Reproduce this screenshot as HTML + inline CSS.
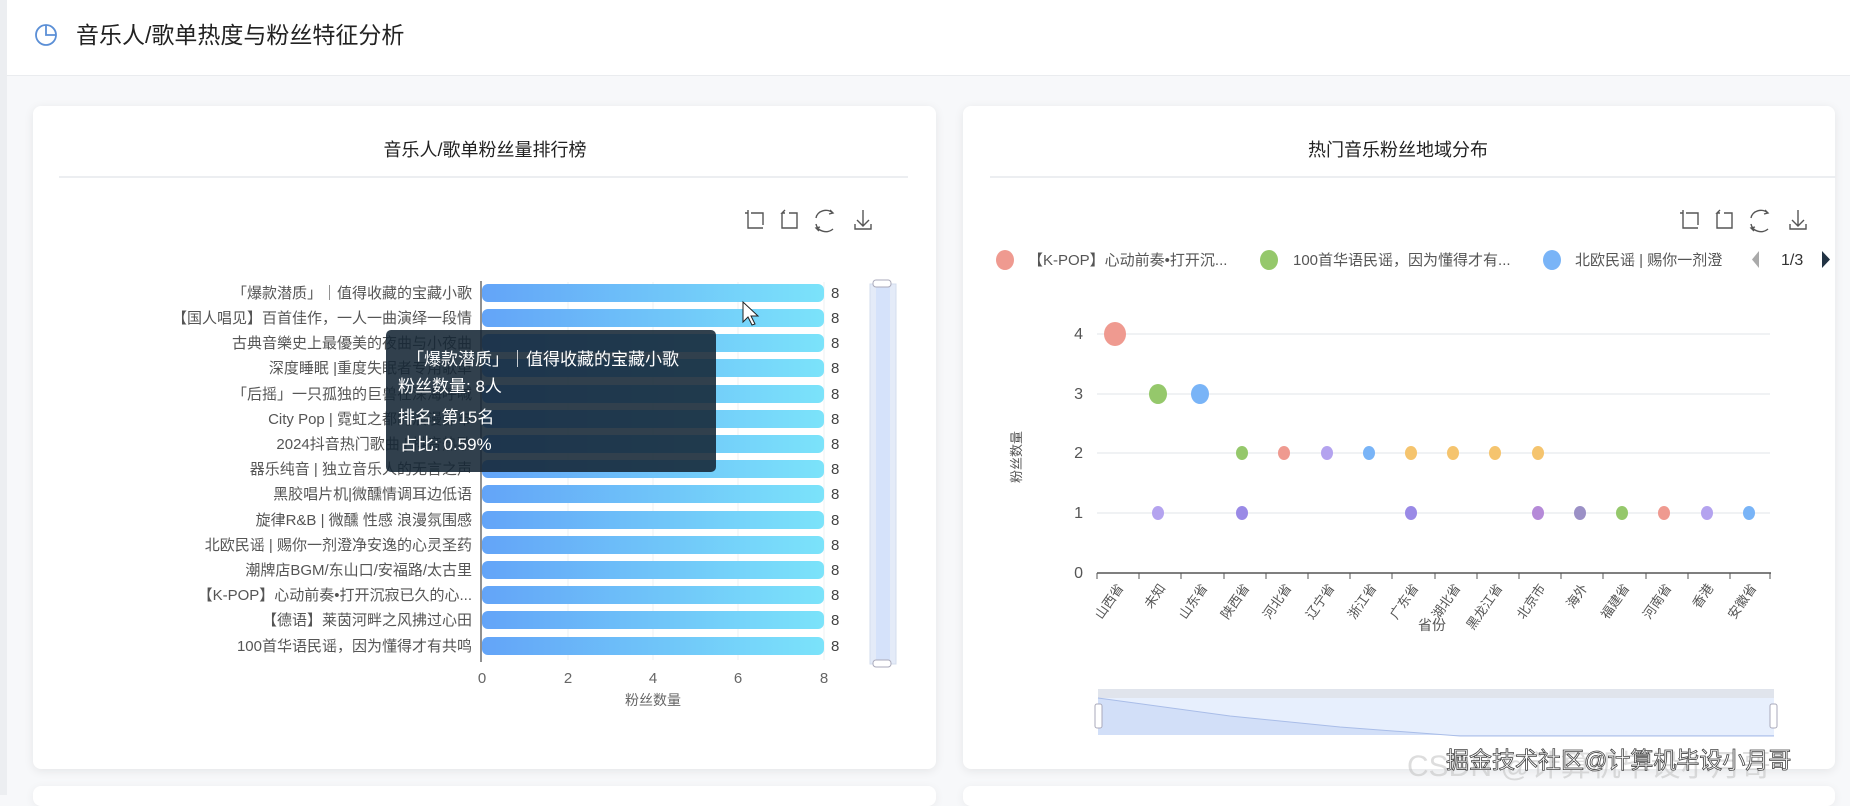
<!DOCTYPE html>
<html><head><meta charset="utf-8"><style>
*{margin:0;padding:0;box-sizing:border-box}
body{width:1850px;height:795px;overflow:hidden;background:#f7f8fa;font-family:"Liberation Sans","Noto Sans CJK SC",sans-serif;position:relative}
.strip{position:absolute;left:0;top:0;width:7px;height:795px;background:#eceef1}
.header{position:absolute;left:7px;top:0;width:1843px;height:76px;background:#fff;border-bottom:1px solid #eaecef}
.card{position:absolute;top:106px;height:663px;background:#fff;border-radius:8px;box-shadow:0 2px 10px rgba(0,0,0,.08)}
svg{position:absolute;left:0;top:0}
</style></head><body>
<div class="strip"></div>
<div class="header"></div>
<div class="card" style="left:33px;width:903px"></div>
<div class="card" style="left:963px;width:872px"></div>
<div style="position:absolute;left:33px;top:786px;width:903px;height:20px;background:#fff;border-radius:8px;box-shadow:0 2px 10px rgba(0,0,0,.06)"></div>
<div style="position:absolute;left:963px;top:786px;width:872px;height:20px;background:#fff;border-radius:8px;box-shadow:0 2px 10px rgba(0,0,0,.06)"></div>
<svg width="1850" height="795" xmlns="http://www.w3.org/2000/svg" font-family="Liberation Sans, Noto Sans CJK SC, sans-serif">
<defs><linearGradient id="g" x1="0" x2="1"><stop offset="0" stop-color="#63a4f8"/><stop offset="1" stop-color="#7be3fa"/></linearGradient></defs>
<circle cx="46" cy="35" r="10" fill="none" stroke="#5b8fd6" stroke-width="1.8"/>
<path d="M46 25V35H56" fill="none" stroke="#5b8fd6" stroke-width="1.8"/>
<text x="76" y="43" font-size="23" fill="#222">音乐人/歌单热度与粉丝特征分析</text>
<text x="485" y="156" font-size="18" fill="#222" text-anchor="middle">音乐人/歌单粉丝量排行榜</text>
<line x1="59" y1="177" x2="908" y2="177" stroke="#eceef1" stroke-width="2"/>
<g fill="none" stroke="#555" stroke-width="1.4">
<path d="M748 210v3h-3M748 213v15h15M751 213h12v12"/>
<path d="M785 213h-3l3-3M782 213v15h15v-15h-8"/>
<path d="M833 213a10 9 0 0 0-17 5M816 224a10 9 0 0 0 17 5M830 210l3 3-4 1M819 231l-3-3 4-1"/>
<path d="M863 210v16M857 220l6 6 6-6M855 224v5h16v-5"/>
</g>
<g stroke="#eef0f3"><line x1="568" y1="282" x2="568" y2="660"/><line x1="653" y1="282" x2="653" y2="660"/><line x1="738" y1="282" x2="738" y2="660"/><line x1="824" y1="282" x2="824" y2="660"/></g>
<g fill="url(#g)">
<rect x="482" y="284" width="342" height="18" rx="6"/><rect x="482" y="309" width="342" height="18" rx="6"/><rect x="482" y="334" width="342" height="18" rx="6"/><rect x="482" y="359" width="342" height="18" rx="6"/><rect x="482" y="385" width="342" height="18" rx="6"/><rect x="482" y="410" width="342" height="18" rx="6"/><rect x="482" y="435" width="342" height="18" rx="6"/><rect x="482" y="460" width="342" height="18" rx="6"/><rect x="482" y="485" width="342" height="18" rx="6"/><rect x="482" y="511" width="342" height="18" rx="6"/><rect x="482" y="536" width="342" height="18" rx="6"/><rect x="482" y="561" width="342" height="18" rx="6"/><rect x="482" y="586" width="342" height="18" rx="6"/><rect x="482" y="611" width="342" height="18" rx="6"/><rect x="482" y="637" width="342" height="18" rx="6"/>
</g>
<line x1="481" y1="281" x2="481" y2="662" stroke="#555" stroke-width="1.3"/>
<g font-size="15" fill="#555" text-anchor="end">
<text x="472" y="298">「爆款潜质」｜值得收藏的宝藏小歌</text>
<text x="472" y="323">【国人唱见】百首佳作，一人一曲演绎一段情</text>
<text x="472" y="348">古典音樂史上最優美的夜曲与小夜曲</text>
<text x="472" y="373">深度睡眠 |重度失眠者专用歌单</text>
<text x="472" y="399">「后摇」一只孤独的巨兽在深海呼喊</text>
<text x="472" y="424">City Pop | 霓虹之都的浪漫都市</text>
<text x="472" y="449">2024抖音热门歌曲 | 抖音热歌</text>
<text x="472" y="474">器乐纯音 | 独立音乐人的无言之声</text>
<text x="472" y="499">黑胶唱片机|微醺情调耳边低语</text>
<text x="472" y="525">旋律R&amp;B | 微醺 性感 浪漫氛围感</text>
<text x="472" y="550">北欧民谣 | 赐你一剂澄净安逸的心灵圣药</text>
<text x="472" y="575">潮牌店BGM/东山口/安福路/太古里</text>
<text x="472" y="600">【K-POP】心动前奏•打开沉寂已久的心...</text>
<text x="472" y="625">【德语】莱茵河畔之风拂过心田</text>
<text x="472" y="651">100首华语民谣，因为懂得才有共鸣</text>
</g>
<g font-size="15" fill="#444">
<text x="831" y="298">8</text><text x="831" y="323">8</text><text x="831" y="348">8</text><text x="831" y="373">8</text><text x="831" y="399">8</text><text x="831" y="424">8</text><text x="831" y="449">8</text><text x="831" y="474">8</text><text x="831" y="499">8</text><text x="831" y="525">8</text><text x="831" y="550">8</text><text x="831" y="575">8</text><text x="831" y="600">8</text><text x="831" y="625">8</text><text x="831" y="651">8</text>
</g>
<g font-size="15" fill="#666" text-anchor="middle">
<text x="482" y="683">0</text><text x="568" y="683">2</text><text x="653" y="683">4</text><text x="738" y="683">6</text><text x="824" y="683">8</text>
<text x="653" y="705" font-size="14">粉丝数量</text>
</g>
<rect x="870" y="284" width="26" height="380" fill="#e4ebf8" stroke="#d3dcee"/>
<rect x="876" y="286" width="14" height="376" fill="#d5e2fa"/>
<rect x="873" y="280" width="18" height="7" rx="3" fill="#fff" stroke="#aab"/>
<rect x="873" y="660" width="18" height="7" rx="3" fill="#fff" stroke="#aab"/>
<rect x="386" y="330" width="330" height="142" rx="5" fill="#142634" fill-opacity="0.88"/>
<g font-size="17" fill="#fff">
<text x="407" y="365">「爆款潜质」｜值得收藏的宝藏小歌</text>
<text x="398" y="392">粉丝数量: 8人</text>
<text x="398" y="423">排名: 第15名</text>
<text x="400" y="450">占比: 0.59%</text>
</g>
<path d="M743 302v20l5-5 4 8 3-1-4-8h7z" fill="#fff" stroke="#222" stroke-width="1"/>
<text x="1398" y="156" font-size="18" fill="#222" text-anchor="middle">热门音乐粉丝地域分布</text>
<line x1="990" y1="177" x2="1836" y2="177" stroke="#eceef1" stroke-width="2"/>
<g fill="none" stroke="#555" stroke-width="1.4" transform="translate(935,0)">
<path d="M748 210v3h-3M748 213v15h15M751 213h12v12"/>
<path d="M785 213h-3l3-3M782 213v15h15v-15h-8"/>
<path d="M833 213a10 9 0 0 0-17 5M816 224a10 9 0 0 0 17 5M830 210l3 3-4 1M819 231l-3-3 4-1"/>
<path d="M863 210v16M857 220l6 6 6-6M855 224v5h16v-5"/>
</g>
<g font-size="15" fill="#555">
<ellipse cx="1005" cy="260" rx="9" ry="10" fill="#ef9a90"/><text x="1028" y="265">【K-POP】心动前奏•打开沉...</text>
<ellipse cx="1269" cy="260" rx="9" ry="10" fill="#95c86b"/><text x="1293" y="265">100首华语民谣，因为懂得才有...</text>
<ellipse cx="1552" cy="260" rx="9" ry="10" fill="#79b4f7"/><text x="1575" y="265">北欧民谣 | 赐你一剂澄</text>
<rect x="1740" y="245" width="14" height="30" fill="#fff"/>
<path d="M1759 251v17l-7-8.5z" fill="#aaa"/><text x="1781" y="265" font-size="16" fill="#333">1/3</text>
<path d="M1822 251v17l8-8.5z" fill="#223344"/>
</g>
<g stroke="#eceef1" stroke-width="1.5"><line x1="1097" y1="334" x2="1770" y2="334"/><line x1="1097" y1="394" x2="1770" y2="394"/><line x1="1097" y1="453" x2="1770" y2="453"/><line x1="1097" y1="513" x2="1770" y2="513"/></g>
<line x1="1097" y1="573" x2="1771" y2="573" stroke="#555" stroke-width="1.5"/>
<g stroke="#555"><line x1="1097" y1="573" x2="1097" y2="579"/><line x1="1139" y1="573" x2="1139" y2="579"/><line x1="1181" y1="573" x2="1181" y2="579"/><line x1="1224" y1="573" x2="1224" y2="579"/><line x1="1266" y1="573" x2="1266" y2="579"/><line x1="1308" y1="573" x2="1308" y2="579"/><line x1="1350" y1="573" x2="1350" y2="579"/><line x1="1392" y1="573" x2="1392" y2="579"/><line x1="1435" y1="573" x2="1435" y2="579"/><line x1="1477" y1="573" x2="1477" y2="579"/><line x1="1519" y1="573" x2="1519" y2="579"/><line x1="1561" y1="573" x2="1561" y2="579"/><line x1="1603" y1="573" x2="1603" y2="579"/><line x1="1646" y1="573" x2="1646" y2="579"/><line x1="1688" y1="573" x2="1688" y2="579"/><line x1="1730" y1="573" x2="1730" y2="579"/><line x1="1770" y1="573" x2="1770" y2="579"/></g>
<g font-size="16" fill="#555" text-anchor="end">
<text x="1083" y="339">4</text><text x="1083" y="399">3</text><text x="1083" y="458">2</text><text x="1083" y="518">1</text><text x="1083" y="578">0</text>
</g>
<text transform="translate(1021,457) rotate(-90)" font-size="13" fill="#555" text-anchor="middle">粉丝数量</text>
<g font-size="13" fill="#555" text-anchor="end">
<text transform="translate(1124,588) rotate(-55)">山西省</text>
<text transform="translate(1166,588) rotate(-55)">未知</text>
<text transform="translate(1208,588) rotate(-55)">山东省</text>
<text transform="translate(1250,588) rotate(-55)">陕西省</text>
<text transform="translate(1292,588) rotate(-55)">河北省</text>
<text transform="translate(1335,588) rotate(-55)">辽宁省</text>
<text transform="translate(1377,588) rotate(-55)">浙江省</text>
<text transform="translate(1419,588) rotate(-55)">广东省</text>
<text transform="translate(1461,588) rotate(-55)">湖北省</text>
<text transform="translate(1503,588) rotate(-55)">黑龙江省</text>
<text transform="translate(1546,588) rotate(-55)">北京市</text>
<text transform="translate(1588,588) rotate(-55)">海外</text>
<text transform="translate(1630,588) rotate(-55)">福建省</text>
<text transform="translate(1672,588) rotate(-55)">河南省</text>
<text transform="translate(1714,588) rotate(-55)">香港</text>
<text transform="translate(1757,588) rotate(-55)">安徽省</text>
</g>
<text x="1432" y="630" font-size="14" fill="#555" text-anchor="middle">省份</text>
<g>
<ellipse cx="1115" cy="334" rx="11" ry="12" fill="#ef9a90"/>
<ellipse cx="1158" cy="394" rx="9" ry="10" fill="#95c86b"/>
<ellipse cx="1200" cy="394" rx="9" ry="10" fill="#79b4f7"/>
<ellipse cx="1242" cy="453" rx="6" ry="7" fill="#95c86b"/>
<ellipse cx="1284" cy="453" rx="6" ry="7" fill="#ef9a90"/>
<ellipse cx="1327" cy="453" rx="6" ry="7" fill="#b4a3ef"/>
<ellipse cx="1369" cy="453" rx="6" ry="7" fill="#79b4f7"/>
<ellipse cx="1411" cy="453" rx="6" ry="7" fill="#f5c46e"/>
<ellipse cx="1453" cy="453" rx="6" ry="7" fill="#f5c46e"/>
<ellipse cx="1495" cy="453" rx="6" ry="7" fill="#f5c46e"/>
<ellipse cx="1538" cy="453" rx="6" ry="7" fill="#f5c46e"/>
<ellipse cx="1158" cy="513" rx="6" ry="7" fill="#b4a3ef"/>
<ellipse cx="1242" cy="513" rx="6" ry="7" fill="#9a8ae6"/>
<ellipse cx="1411" cy="513" rx="6" ry="7" fill="#9a8ae6"/>
<ellipse cx="1538" cy="513" rx="6" ry="7" fill="#b58ad8"/>
<ellipse cx="1580" cy="513" rx="6" ry="7" fill="#9b90c6"/>
<ellipse cx="1622" cy="513" rx="6" ry="7" fill="#95c86b"/>
<ellipse cx="1664" cy="513" rx="6" ry="7" fill="#ef9a90"/>
<ellipse cx="1707" cy="513" rx="6" ry="7" fill="#b4a3ef"/>
<ellipse cx="1749" cy="513" rx="6" ry="7" fill="#79b4f7"/>
</g>
<rect x="1098" y="689" width="676" height="9" fill="#e0e4ec"/>
<rect x="1098" y="698" width="676" height="37" fill="#e7effd"/>
<path d="M1098 698L1230 716L1340 727L1460 736L1774 736L1774 735L1098 735Z" fill="#d2dff8"/>
<path d="M1098 698L1230 716L1340 727L1460 736L1774 736" fill="none" stroke="#a9bde8"/>
<rect x="1095" y="704" width="7" height="24" rx="2" fill="#fff" stroke="#aab"/>
<rect x="1770" y="704" width="7" height="24" rx="2" fill="#fff" stroke="#aab"/>
<text x="1407" y="776" font-size="30" fill="#bbb" fill-opacity="0.5">CSDN @计算机毕设小月哥</text>
<text x="1446" y="768" font-size="23" fill="#fff" stroke="#444" stroke-width="0.8">掘金技术社区@计算机毕设小月哥</text>
</svg>
</body></html>
